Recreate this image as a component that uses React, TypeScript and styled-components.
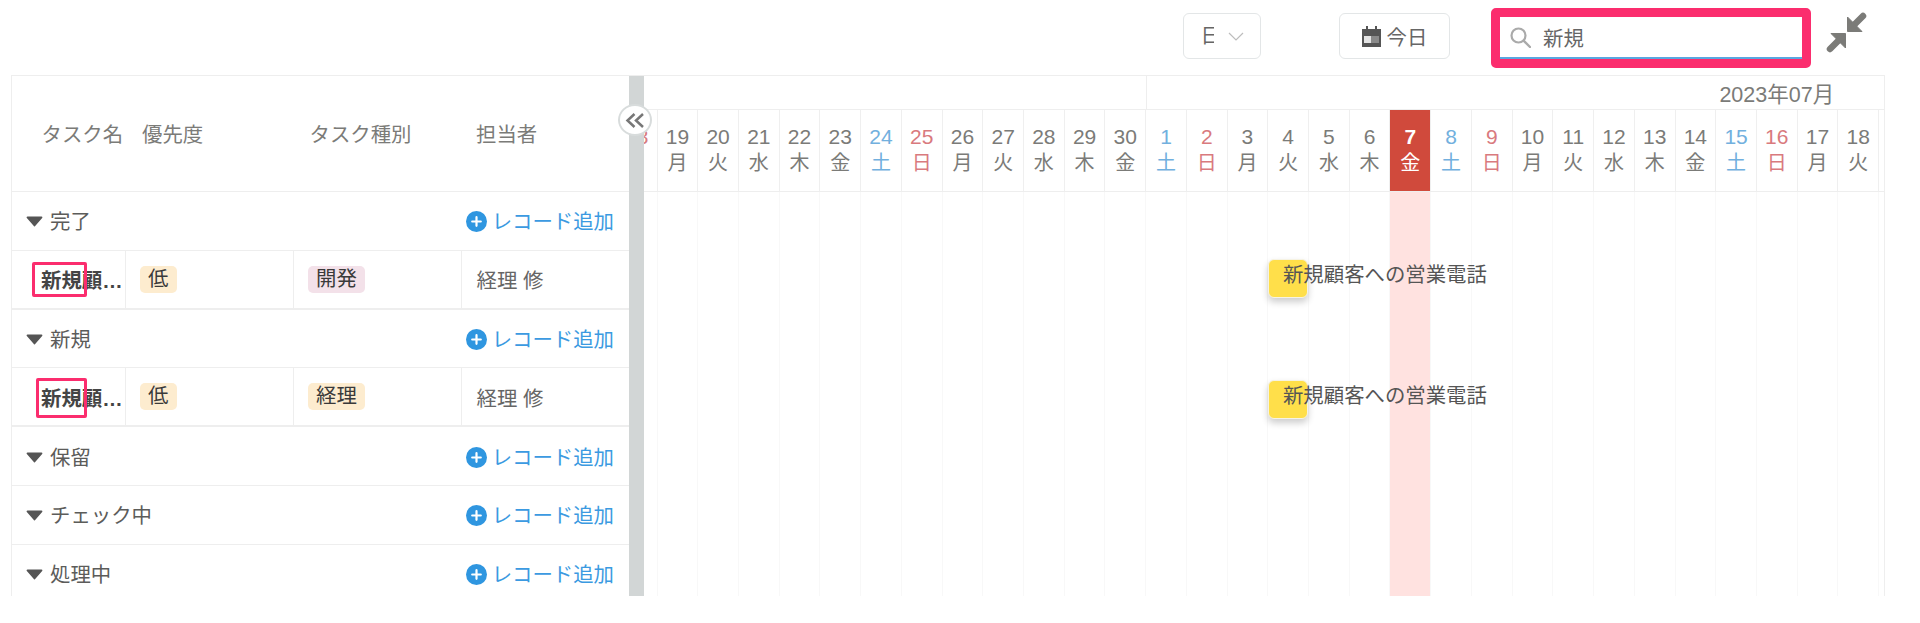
import React from 'react'
import styled, { createGlobalStyle } from 'styled-components'

const COL = 40.73

const GlobalStyle = createGlobalStyle`
  * { box-sizing: border-box; }
  html, body { margin: 0; padding: 0; background: #fff; }
  body {
    font-family: "Liberation Sans", "Noto Sans CJK JP", sans-serif;
    font-size: 20.4px;
    color: #5c5c5a;
  }
`

const Page = styled.div`
  width: 1920px;
  height: 623px;
  overflow: hidden;
  background: #fff;
`

const Toolbar = styled.div`
  display: flex;
  justify-content: flex-end;
  align-items: flex-start;
  height: 75px;
  padding: 8px 53px 0 0;
`

const Control = styled.div`
  display: flex;
  align-items: center;
  height: 46px;
  margin-top: 5px;
  border: 1.5px solid #e3e6e7;
  border-radius: 6px;
  background: #fff;
`

const ViewSelect = styled(Control)`
  width: 78px;
  padding-left: 16.5px;
  margin-right: 78px;
`

const ViewValue = styled.span`
  display: block;
  width: 13px;
  overflow: hidden;
  white-space: nowrap;
  line-height: 24px;
  margin-right: 14px;
  color: #666;
`

const TodayButton = styled(Control)`
  width: 111px;
  justify-content: center;
  gap: 6px;
  margin-right: 41px;
  color: #666;
`

const SearchBox = styled.div`
  display: flex;
  align-items: center;
  width: 320px;
  height: 60px;
  padding: 0 0 2px 10px;
  gap: 12px;
  border: 9px solid #fb2d6e;
  border-radius: 5px;
  background: #fff;
  box-shadow: inset 0 -2px 0 #5aa6e0;
  color: #666;
`

const CompressButton = styled.div`
  width: 41px;
  height: 41px;
  margin: 4px 0 0 15px;
`

const Table = styled.div`
  display: flex;
  height: 521px;
  width: 1874px;
  margin-left: 11px;
  border-top: 1px solid #eeeeee;
  border-right: 1px solid #eeeeee;
  overflow: hidden;
`

const LeftPanel = styled.div`
  width: 618px;
  flex: none;
  border-left: 1px solid #eeeeee;
`

const LeftHead = styled.div`
  display: grid;
  grid-template-columns: 112.5px 168px 168px 168px;
  align-items: center;
  height: 116px;
  padding-bottom: 2px;
  border-bottom: 1.5px solid #eeeeee;
  color: #7b7b78;
`

const HeadCell = styled.div<{ $pad: number }>`
  padding-left: ${p => p.$pad}px;
  white-space: nowrap;
`

const GroupRow = styled.div`
  display: flex;
  align-items: center;
  height: 58.8px;
  padding: 0 15px 1px 14px;
  border-bottom: 1.5px solid #eeeeee;
  color: #5c5c5a;
  svg:first-child { margin-top: 3px; }
`

const GroupName = styled.span`
  margin-left: 7px;
  flex: 1;
`

const AddRecord = styled.span`
  display: flex;
  align-items: center;
  gap: 4.5px;
  color: #3b9ae1;
`

const TaskRow = styled.div`
  display: grid;
  grid-template-columns: 112.5px 168px 168px 168px;
  height: 58.8px;
  border-bottom: 2px solid #eeeeee;
`

const TaskCell = styled.div<{ $pad?: number }>`
  display: flex;
  align-items: center;
  padding-left: ${p => p.$pad ?? 14}px;
  border-left: 1.5px solid #eeeeee;
  color: #666;
`

const NameCell = styled.div`
  position: relative;
  display: flex;
  align-items: center;
  padding-left: 29px;
`

const NameText = styled.span`
  display: block;
  width: 82px;
  overflow: hidden;
  white-space: nowrap;
  text-overflow: ellipsis;
  font-weight: 700;
  color: #444;
`

const Marker = styled.div<{ $left: number; $top: number; $width: number; $height: number }>`
  position: absolute;
  left: ${p => p.$left}px;
  top: ${p => p.$top}px;
  width: ${p => p.$width}px;
  height: ${p => p.$height}px;
  border: 3.5px solid #fb2d6e;
  border-radius: 2px;
`

const Tag = styled.span<{ $bg: string }>`
  display: inline-block;
  height: 27px;
  line-height: 27px;
  padding: 0 8.5px;
  border-radius: 5px;
  background: ${p => p.$bg};
  color: #3a3a3a;
`

const Gutter = styled.div`
  position: relative;
  width: 15px;
  flex: none;
  background: #d2d6d6;
`

const CollapseToggle = styled.div`
  position: absolute;
  left: -11px;
  top: 28px;
  width: 34px;
  height: 32px;
  display: flex;
  align-items: center;
  justify-content: center;
  border: 2px solid #d8dcdc;
  border-radius: 50%;
  background: #fff;
`

const RightPanel = styled.div`
  flex: 1;
  min-width: 0;
  overflow: hidden;
`

const Track = styled.div`
  display: flex;
  flex-direction: column;
  height: 100%;
  width: ${32 * COL}px;
  margin-left: -27.2px;
`

const MonthRow = styled.div`
  display: flex;
  height: 34px;
  flex: none;
  border-bottom: 1.5px solid #eeeeee;
`

const MonthCell = styled.div<{ $span: number }>`
  display: flex;
  align-items: center;
  justify-content: flex-end;
  width: ${p => p.$span * COL}px;
  padding-right: 86px;
  font-size: 21.5px;
  color: #7b7b78;
  & + & { border-left: 1.5px solid #eeeeee; }
`

const DayRow = styled.div`
  display: grid;
  grid-template-columns: repeat(32, ${COL}px);
  height: 82px;
  flex: none;
  border-bottom: 1.5px solid #eeeeee;
`

const tone = { plain: '#7b7b78', sat: '#72b0de', sun: '#d97a7e', today: '#fff' }
type Tone = keyof typeof tone

const DayCell = styled.div<{ $tone: Tone }>`
  display: flex;
  flex-direction: column;
  align-items: center;
  padding-top: 13px;
  border-right: 1.5px solid #efefef;
  color: ${p => tone[p.$tone]};
  background: ${p => (p.$tone === 'today' ? '#d04a3c' : 'transparent')};
  font-weight: ${p => (p.$tone === 'today' ? 700 : 400)};
`

const DayNumber = styled.span`
  font-size: 21px;
  line-height: 27px;
`

const Weekday = styled.span`
  font-size: 20px;
  line-height: 26px;
  font-weight: 400;
`

const GanttBody = styled.div`
  position: relative;
  flex: 1;
  display: grid;
  grid-template-columns: repeat(32, ${COL}px);
`

const BodyColumn = styled.div<{ $today: boolean }>`
  border-right: 1px solid #f8f8f8;
  background: ${p => (p.$today ? '#ffe2e0' : 'transparent')};
`

const Bar = styled.div<{ $top: number }>`
  position: absolute;
  left: ${16 * COL}px;
  top: ${p => p.$top}px;
  width: 40px;
  height: 39px;
  border: 1px solid #f6f3e4;
  border-radius: 6px;
  background: #ffdf4a;
  box-shadow: 0 4px 7px rgba(0, 0, 0, 0.2);
`

const BarLabel = styled.span`
  position: absolute;
  left: 13.5px;
  top: 4px;
  line-height: 22px;
  white-space: nowrap;
  color: #555;
`

const dayNames = ['日', '月', '火', '水', '木', '金', '土']

const days = Array.from({ length: 32 }, (_, i) => {
  // June 18 2023 is a Sunday, the grid starts there
  const date = new Date(2023, 5, 18 + i)
  const dow = date.getDay()
  const isToday = date.getMonth() === 6 && date.getDate() === 7
  const dayTone: Tone = isToday ? 'today' : dow === 0 ? 'sun' : dow === 6 ? 'sat' : 'plain'
  return { num: date.getDate(), name: dayNames[dow], tone: dayTone, isToday }
})

const TASK = '新規顧客への営業電話'

const Caret = () => (
  <svg width="17" height="11" viewBox="0 0 17 11">
    <path d="M1.5 1.5h14L8.5 9.5z" fill="#555" stroke="#555" strokeWidth="1.8" strokeLinejoin="round" />
  </svg>
)

const PlusCircle = () => (
  <svg width="21" height="21" viewBox="0 0 21 21">
    <circle cx="10.5" cy="10.5" r="10.5" fill="#2f96e0" />
    <path d="M10.5 6.2v8.6M6.2 10.5h8.6" stroke="#fff" strokeWidth="2.2" strokeLinecap="round" />
  </svg>
)

const Group = ({ name }: { name: string }) => (
  <GroupRow>
    <Caret />
    <GroupName>{name}</GroupName>
    <AddRecord>
      <PlusCircle />
      レコード追加
    </AddRecord>
  </GroupRow>
)

export default function App() {
  return (
    <Page>
      <GlobalStyle />
      <Toolbar>
        <ViewSelect>
          <ViewValue>日</ViewValue>
          <svg width="16" height="9" viewBox="0 0 16 9">
            <path d="M1 1l7 7 7-7" fill="none" stroke="#bdbdbd" strokeWidth="1.2" />
          </svg>
        </ViewSelect>
        <TodayButton>
          <svg width="19" height="21" viewBox="0 0 19 21">
            <path d="M4 0h2v3h7V0h2v3h4v18H0V3h4z" fill="#555" />
            <rect x="2" y="10" width="7" height="7" fill="#e4e4e4" />
            <rect x="9" y="10" width="8" height="7" fill="#8a8a8a" />
          </svg>
          今日
        </TodayButton>
        <SearchBox>
          <svg width="21" height="21" viewBox="0 0 21 21">
            <circle cx="8.5" cy="8.5" r="7" fill="none" stroke="#aaa" strokeWidth="2.2" />
            <path d="M13.6 13.6L20 20" stroke="#aaa" strokeWidth="2.4" strokeLinecap="round" />
          </svg>
          新規
        </SearchBox>
        <CompressButton>
          <svg width="41" height="41" viewBox="0 0 41 41">
            <path d="M21.5 5v14.5H36z" fill="#7b7b78" stroke="#7b7b78" strokeWidth="1" strokeLinejoin="round" />
            <path d="M26 15L37 4" stroke="#7b7b78" strokeWidth="6.5" strokeLinecap="round" />
            <path d="M19.5 36V21.5H5z" fill="#7b7b78" stroke="#7b7b78" strokeWidth="1" strokeLinejoin="round" />
            <path d="M15 26L4 37" stroke="#7b7b78" strokeWidth="6.5" strokeLinecap="round" />
          </svg>
        </CompressButton>
      </Toolbar>
      <Table>
        <LeftPanel>
          <LeftHead>
            <HeadCell $pad={29.5}>タスク名</HeadCell>
            <HeadCell $pad={17.5}>優先度</HeadCell>
            <HeadCell $pad={17}>タスク種別</HeadCell>
            <HeadCell $pad={15.5}>担当者</HeadCell>
          </LeftHead>
          <Group name="完了" />
          <TaskRow>
            <NameCell>
              <NameText>{TASK}</NameText>
              <Marker $left={20.3} $top={10.9} $width={54.7} $height={35} />
            </NameCell>
            <TaskCell><Tag $bg="#fdeccf">低</Tag></TaskCell>
            <TaskCell><Tag $bg="#f3e1e9">開発</Tag></TaskCell>
            <TaskCell $pad={15}>経理 修</TaskCell>
          </TaskRow>
          <Group name="新規" />
          <TaskRow>
            <NameCell>
              <NameText>{TASK}</NameText>
              <Marker $left={24.4} $top={9.6} $width={50.3} $height={39.7} />
            </NameCell>
            <TaskCell><Tag $bg="#fdeccf">低</Tag></TaskCell>
            <TaskCell><Tag $bg="#fdeccf">経理</Tag></TaskCell>
            <TaskCell $pad={15}>経理 修</TaskCell>
          </TaskRow>
          <Group name="保留" />
          <Group name="チェック中" />
          <Group name="処理中" />
        </LeftPanel>
        <Gutter>
          <CollapseToggle>
            <svg width="20" height="15" viewBox="0 0 20 15">
              <path d="M9.5 1L2.5 7.5l7 6.5M18 1l-7 6.5 7 6.5" fill="none" stroke="#777" strokeWidth="2.5" />
            </svg>
          </CollapseToggle>
        </Gutter>
        <RightPanel>
          <Track>
            <MonthRow>
              <MonthCell $span={13} />
              <MonthCell $span={19}>2023年07月</MonthCell>
            </MonthRow>
            <DayRow>
              {days.map((d, i) => (
                <DayCell key={i} $tone={d.tone}>
                  <DayNumber>{d.num}</DayNumber>
                  <Weekday>{d.name}</Weekday>
                </DayCell>
              ))}
            </DayRow>
            <GanttBody>
              {days.map((d, i) => (
                <BodyColumn key={i} $today={d.isToday} />
              ))}
              <Bar $top={67.3}><BarLabel>{TASK}</BarLabel></Bar>
              <Bar $top={187.7}><BarLabel>{TASK}</BarLabel></Bar>
            </GanttBody>
          </Track>
        </RightPanel>
      </Table>
    </Page>
  )
}
